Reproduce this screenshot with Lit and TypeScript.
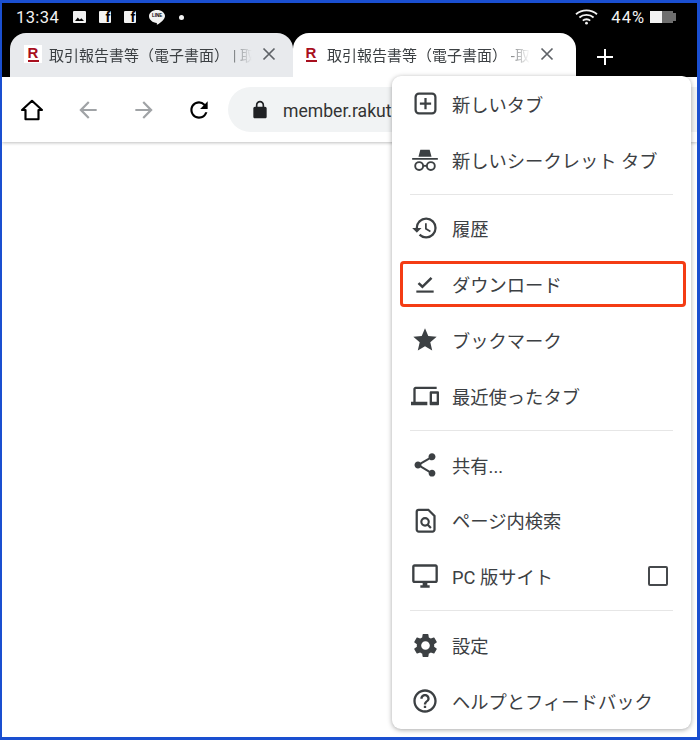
import { LitElement, css, html, svg } from "lit";
import { customElement } from "lit/decorators.js";

const icons = {
  newTab: svg`<rect x="3.2" y="3.2" width="17.6" height="17.6" rx="3" fill="none" stroke="currentColor" stroke-width="2"/><path d="M11 7h2v4h4v2h-4v4h-2v-4H7v-2h4z"/>`,
  incognito: svg`<path d="M8 3.2h8l1.6 6H6.4zM1 10.2h22v1.6H1z"/><circle cx="7" cy="17.2" r="3.4" fill="none" stroke="currentColor" stroke-width="1.6"/><circle cx="17" cy="17.2" r="3.4" fill="none" stroke="currentColor" stroke-width="1.6"/><path d="M10.2 16.2h3.6v1.6h-3.6z"/>`,
  history: svg`<path d="M13 3a9 9 0 0 0-9 9H1l3.89 3.89.07.14L9 12H6c0-3.87 3.13-7 7-7s7 3.13 7 7-3.13 7-7 7c-1.93 0-3.68-.79-4.94-2.06l-1.42 1.42A8.954 8.954 0 0 0 13 21a9 9 0 0 0 0-18zm-1 5v5l4.28 2.54.72-1.21-3.5-2.08V8H12z"/>`,
  download: svg`<path d="M4 18h16v2H4z"/><path d="M6 11.2l3.6 3.4L18 6.4" fill="none" stroke="currentColor" stroke-width="2.4"/>`,
  star: svg`<path d="M12 17.27L18.18 21l-1.64-7.03L22 9.24l-7.19-.61L12 2 9.19 8.63 2 9.24l5.46 4.73L5.82 21z"/>`,
  devices: svg`<path d="M4 6h18V4H4c-1.1 0-2 .9-2 2v11H0v3h14v-3H4V6zm19 2h-6c-.55 0-1 .45-1 1v10c0 .55.45 1 1 1h6c.55 0 1-.45 1-1V9c0-.55-.45-1-1-1zm-1 9h-4v-7h4v7z"/>`,
  share: svg`<path d="M18 16.08c-.76 0-1.44.3-1.96.77L8.91 12.7c.05-.23.09-.46.09-.7s-.04-.47-.09-.7l7.05-4.11c.54.5 1.25.81 2.04.81 1.66 0 3-1.34 3-3s-1.34-3-3-3-3 1.34-3 3c0 .24.04.47.09.7L8.04 9.81C7.5 9.31 6.79 9 6 9c-1.66 0-3 1.34-3 3s1.34 3 3 3c.79 0 1.5-.31 2.04-.81l7.12 4.16c-.05.21-.08.43-.08.65 0 1.61 1.31 2.92 2.92 2.92 1.61 0 2.92-1.31 2.92-2.92s-1.31-2.92-2.92-2.92z"/>`,
  find: svg`<path d="M6 2.5h8.5L20 8v12a1.8 1.8 0 0 1-1.8 1.8H6A1.8 1.8 0 0 1 4.2 20V4.3A1.8 1.8 0 0 1 6 2.5z" fill="none" stroke="currentColor" stroke-width="2"/><circle cx="11.6" cy="13.2" r="3.3" fill="none" stroke="currentColor" stroke-width="1.9"/><path d="M13.8 15.6l3 3" stroke="currentColor" stroke-width="2"/>`,
  desktop: svg`<path d="M21 2H3c-1.1 0-2 .9-2 2v12c0 1.1.9 2 2 2h7v2H8v2h8v-2h-2v-2h7c1.1 0 2-.9 2-2V4c0-1.1-.9-2-2-2zm0 14H3V4h18v12z"/>`,
  settings: svg`<path d="M19.14 12.94c.04-.3.06-.61.06-.94 0-.32-.02-.64-.07-.94l2.03-1.58a.49.49 0 0 0 .12-.61l-1.92-3.32a.488.488 0 0 0-.59-.22l-2.39.96c-.5-.38-1.03-.7-1.62-.94l-.36-2.54a.484.484 0 0 0-.48-.41h-3.84c-.24 0-.43.17-.47.41l-.36 2.54c-.59.24-1.13.57-1.62.94l-2.39-.96c-.22-.08-.47 0-.59.22L2.74 8.87c-.12.21-.08.47.12.61l2.03 1.58c-.05.3-.09.63-.09.94s.02.64.07.94l-2.03 1.58a.49.49 0 0 0-.12.61l1.92 3.32c.12.22.37.29.59.22l2.39-.96c.5.38 1.03.7 1.62.94l.36 2.54c.05.24.24.41.48.41h3.84c.24 0 .44-.17.47-.41l.36-2.54c.59-.24 1.13-.56 1.62-.94l2.39.96c.22.08.47 0 .59-.22l1.92-3.32c.12-.22.07-.47-.12-.61l-2.01-1.58zM12 15.6c-1.98 0-3.6-1.62-3.6-3.6s1.62-3.6 3.6-3.6 3.6 1.62 3.6 3.6-1.62 3.6-3.6 3.6z"/>`,
  help: svg`<path d="M11 18h2v-2h-2v2zm1-16C6.48 2 2 6.48 2 12s4.48 10 10 10 10-4.48 10-10S17.52 2 12 2zm0 18c-4.41 0-8-3.59-8-8s3.59-8 8-8 8 3.59 8 8-3.59 8-8 8zm0-14c-2.21 0-4 1.79-4 4h2c0-1.1.9-2 2-2s2 .9 2 2c0 2-3 1.75-3 5h2c0-2.25 3-2.5 3-5 0-2.21-1.79-4-4-4z"/>`,
};

type IconName = keyof typeof icons;
type MenuItem = { icon: IconName; label: string; size?: number; marked?: boolean; check?: boolean };

const sections: MenuItem[][] = [
  [
    { icon: "newTab", label: "新しいタブ", size: 27 },
    { icon: "incognito", label: "新しいシークレット タブ", size: 28 },
  ],
  [
    { icon: "history", label: "履歴", size: 28 },
    { icon: "download", label: "ダウンロード", size: 26, marked: true },
    { icon: "star", label: "ブックマーク", size: 28 },
    { icon: "devices", label: "最近使ったタブ", size: 28 },
  ],
  [
    { icon: "share", label: "共有...", size: 28 },
    { icon: "find", label: "ページ内検索", size: 27 },
    { icon: "desktop", label: "PC 版サイト", size: 28, check: true },
  ],
  [
    { icon: "settings", label: "設定", size: 29 },
    { icon: "help", label: "ヘルプとフィードバック", size: 28 },
  ],
];

@customElement("app-root")
export class AppRoot extends LitElement {
  static styles = css`
    :host {
      display: block;
      width: 700px;
      height: 740px;
      font-family: "Roboto", "Noto Sans CJK JP", sans-serif;
    }

    .frame {
      position: relative;
      box-sizing: border-box;
      width: 700px;
      height: 740px;
      border: solid #1a4fd0;
      border-width: 3px 3px 3px 2px;
      background: #fff;
      overflow: hidden;
    }

    .status {
      display: flex;
      align-items: center;
      box-sizing: border-box;
      height: 30px;
      padding: 0 21px 2px 14px;
      background: #000;
      color: #f2f2f2;
      font-size: 16.5px;
    }

    .status .time {
      margin-right: 14px;
      letter-spacing: 0.4px;
    }

    .status svg {
      display: block;
      flex: none;
    }

    .notes {
      display: flex;
      align-items: center;
      gap: 13px;
    }

    .fb {
      display: flex;
      justify-content: flex-end;
      align-items: flex-end;
      box-sizing: border-box;
      width: 12px;
      height: 12px;
      padding-right: 1px;
      border-radius: 1px;
      background: #f2f2f2;
      color: #000;
      font: bold 14px/12px "Liberation Sans", sans-serif;
    }

    .line {
      position: relative;
      width: 16px;
      height: 15px;
    }

    .line b {
      position: absolute;
      left: 0;
      top: 2px;
      width: 16px;
      text-align: center;
      color: #000;
      font: bold 4.5px/8px "Liberation Sans", sans-serif;
    }

    .dot {
      width: 5px;
      height: 5px;
      margin-left: 1px;
      border-radius: 50%;
      background: #f2f2f2;
    }

    .status .right {
      display: flex;
      align-items: center;
      margin-left: auto;
    }

    .pct {
      margin: 0 5px 0 13px;
      letter-spacing: 1px;
    }

    .tabs {
      display: flex;
      align-items: stretch;
      height: 44px;
      padding-left: 8px;
      background: #000;
    }

    .tab {
      display: flex;
      align-items: center;
      box-sizing: border-box;
      width: 283px;
      padding-bottom: 2px;
      border-radius: 16px 16px 0 0;
      font-size: 15px;
      color: #3c4043;
    }

    .tab.off {
      padding-left: 14px;
      padding-right: 17px;
      background: #e8eaed;
    }

    .tab.on {
      padding-left: 9px;
      padding-right: 22px;
      background: #fff;
    }

    .logo {
      flex: none;
      width: 18px;
      height: 18px;
      text-align: center;
      color: #a80f1e;
      font: bold 15px/15px "Liberation Sans", sans-serif;
      background: #fff;
    }

    .logo::after {
      content: "";
      display: block;
      width: 11px;
      height: 1.5px;
      margin: 0 auto;
      background: #a80f1e;
    }

    .title {
      flex: 1;
      min-width: 0;
      margin-left: 7px;
      white-space: nowrap;
      overflow: hidden;
      -webkit-mask-image: linear-gradient(90deg, #000 84%, transparent 98%);
      mask-image: linear-gradient(90deg, #000 84%, transparent 98%);
    }

    .close {
      flex: none;
      display: block;
      width: 14px;
      height: 14px;
      margin-left: 6px;
      color: #5f6368;
    }

    .plus {
      display: block;
      width: 16px;
      height: 16px;
      margin: 16px 0 0 21px;
      color: #fff;
    }

    .toolbar {
      display: flex;
      align-items: center;
      height: 65px;
      padding-left: 17px;
      box-shadow: 0 1px 3px rgba(0, 0, 0, 0.25);
    }

    .toolbar .btn {
      display: block;
      flex: none;
      width: 26px;
      height: 26px;
      margin-right: 30px;
      color: #000;
    }

    .toolbar .btn.dim {
      color: #a0a3a6;
    }

    .toolbar .btn.fwd {
      margin-right: 29px;
    }

    .toolbar .btn.reload {
      margin-right: 16px;
    }

    .url {
      flex: 1;
      display: flex;
      align-items: center;
      height: 45px;
      margin-right: -40px;
      padding-left: 22px;
      border-radius: 23px;
      background: #f1f3f4;
      color: #333;
      font-size: 17.6px;
      white-space: nowrap;
      overflow: hidden;
    }

    .url svg {
      flex: none;
      width: 20px;
      height: 20px;
      margin-right: 13px;
      color: #202124;
    }

    .url span {
      padding-top: 3px;
    }

    .menu {
      position: absolute;
      left: 390px;
      top: 73px;
      width: 299px;
      height: 653px;
      border-radius: 9px;
      background: #fff;
      box-shadow: 0 1px 5px rgba(0, 0, 0, 0.35);
      color: #3c4043;
      font-size: 18.3px;
    }

    .rule {
      height: 1px;
      margin: 6px 18px;
      background: #e6e6e6;
    }

    .item {
      position: relative;
      display: flex;
      align-items: center;
      height: 55.8px;
      padding: 0 23px 0 18px;
    }

    .glyph {
      flex: none;
      display: flex;
      justify-content: center;
      align-items: center;
      width: 30px;
      margin-right: 12px;
      color: #3c4043;
    }

    .glyph svg {
      display: block;
      fill: currentColor;
    }

    .item .box {
      box-sizing: border-box;
      width: 20px;
      height: 20px;
      margin-left: auto;
      border: 2px solid #46494c;
      border-radius: 2px;
    }

    .item.marked::after {
      content: "";
      position: absolute;
      left: 8px;
      top: 5px;
      width: 286px;
      height: 46px;
      box-sizing: border-box;
      border: 3px solid #f43c14;
      border-radius: 4px;
    }
  `;

  private icon(name: IconName, size = 26) {
    return html`<svg width=${size} height=${size} viewBox="0 0 24 24">${icons[name]}</svg>`;
  }

  private renderItem(item: MenuItem) {
    return html`
      <div class="item ${item.marked ? "marked" : ""}">
        <span class="glyph">${this.icon(item.icon, item.size)}</span>
        <span>${item.label}</span>
        ${item.check ? html`<span class="box"></span>` : ""}
      </div>
    `;
  }

  private renderTab(state: string, tail: string) {
    return html`
      <div class="tab ${state}">
        <span class="logo">R</span>
        <span class="title">取引報告書等（電子書面）${tail}</span>
        <svg class="close" viewBox="0 0 14 14" fill="none" stroke="currentColor" stroke-width="1.7">
          <path d="M1.5 1.5l11 11M12.5 1.5l-11 11" />
        </svg>
      </div>
    `;
  }

  render() {
    return html`
      <div class="frame">
        <div class="status">
          <span class="time">13:34</span>
          <div class="notes">
            <svg width="13" height="12" viewBox="0 0 13 12">
              <rect width="13" height="12" rx="1" fill="#f2f2f2" />
              <path d="M2 10l2.800-3.600 2 2.400 1.500-1.600 2.700 2.800z" fill="#000" />
            </svg>
            <span class="fb">f</span>
            <span class="fb">f</span>
            <span class="line">
              <svg width="16" height="15" viewBox="0 0 16 15">
                <path d="M8 0c4.400 0 8 2.700 8 6 0 3.600-4.600 6.900-7.600 8.600-.6.300-.7-.4-.5-1.700C3.600 12.700 0 9.800 0 6c0-3.300 3.600-6 8-6z" fill="#f2f2f2" />
              </svg>
              <b>LINE</b>
            </span>
            <span class="dot"></span>
          </div>
          <div class="right">
            <svg width="23" height="16" viewBox="0 0 23 16" fill="none" stroke="#f2f2f2" stroke-width="1.8">
              <path d="M1 5.200c6-5.200 15-5.200 21 0" />
              <path d="M4.400 8.500c3.800-3.400 10.400-3.400 14.200 0" />
              <path d="M7.800 11.600c2-1.800 5.400-1.800 7.400 0" />
              <circle cx="11.500" cy="14.200" r="1.400" fill="#f2f2f2" stroke="none" />
            </svg>
            <span class="pct">44%</span>
            <svg width="26" height="12" viewBox="0 0 26 12">
              <path d="M12 0h11v2h3v8h-3v2H12z" fill="#6e6e6e" />
              <rect width="12" height="12" fill="#f2f2f2" />
            </svg>
          </div>
        </div>

        <div class="tabs">
          ${this.renderTab("off", " | 取")}
          ${this.renderTab("on", " -取")}
          <svg class="plus" viewBox="0 0 16 16" fill="none" stroke="currentColor" stroke-width="2">
            <path d="M8 0v16M0 8h16" />
          </svg>
        </div>

        <div class="toolbar">
          <svg class="btn" viewBox="0 0 24 24" fill="none" stroke="currentColor" stroke-width="2">
            <path d="M12 3.500L2.800 12H6v8.500h12V12h3.200z" stroke-linejoin="round" />
          </svg>
          <svg class="btn dim" viewBox="0 0 24 24" fill="currentColor">
            <path d="M20 11H7.830l5.590-5.590L12 4l-8 8 8 8 1.410-1.410L7.830 13H20v-2z" />
          </svg>
          <svg class="btn dim fwd" viewBox="0 0 24 24" fill="currentColor">
            <path d="M12 4l-1.410 1.410L16.170 11H4v2h12.170l-5.580 5.590L12 20l8-8z" />
          </svg>
          <svg class="btn reload" viewBox="0 0 24 24" fill="currentColor">
            <path d="M17.650 6.350A7.958 7.958 0 0 0 12 4c-4.420 0-7.990 3.580-7.990 8s3.570 8 7.990 8c3.730 0 6.840-2.550 7.730-6h-2.080A5.990 5.990 0 0 1 12 18c-3.310 0-6-2.690-6-6s2.690-6 6-6c1.660 0 3.140.69 4.220 1.780L13 11h7V4l-2.350 2.350z" />
          </svg>
          <div class="url">
            <svg viewBox="0 0 24 24" fill="currentColor">
              <path d="M18 8h-1V6c0-2.760-2.240-5-5-5S7 3.240 7 6v2H6c-1.100 0-2 .9-2 2v10c0 1.100.9 2 2 2h12c1.100 0 2-.9 2-2V10c0-1.100-.9-2-2-2zM9 6c0-1.660 1.340-3 3-3s3 1.340 3 3v2H9V6z" />
            </svg>
            <span>member.rakuten-sec.co.jp</span>
          </div>
        </div>

        <div class="menu">
          ${sections.map(
            (group, i) => html`
              ${i > 0 ? html`<div class="rule"></div>` : ""}
              ${group.map((item) => this.renderItem(item))}
            `,
          )}
        </div>
      </div>
    `;
  }
}
